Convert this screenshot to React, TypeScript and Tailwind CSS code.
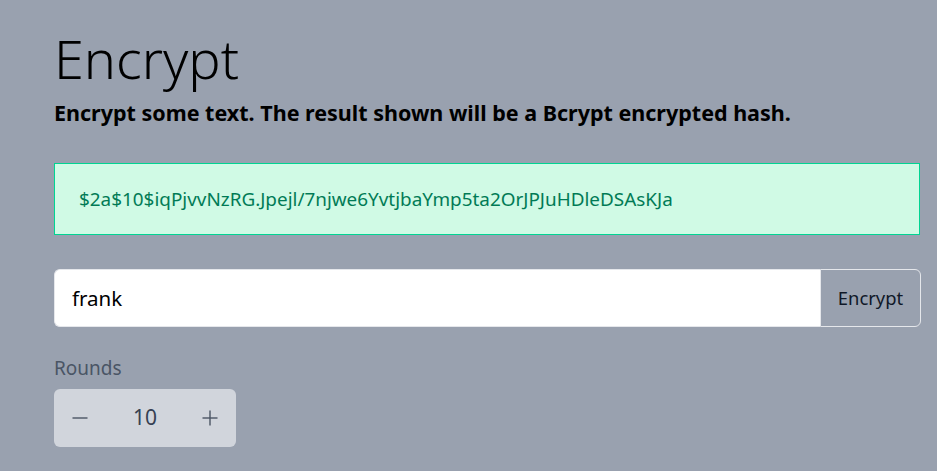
import React, { useState } from "react";

export default function App() {
  const [rounds, setRounds] = useState(10);
  const [text, setText] = useState("frank");
  return (
    <div
      className="min-h-[471px] w-full bg-gray-400 pl-[54px] pr-4 pt-[24px]"
      style={{ fontFamily: '"Noto Sans", "Open Sans", sans-serif' }}
    >
      <h1 className="text-[54px] font-light leading-[68px] text-black">Encrypt</h1>
      <p className="mt-[7px] text-[21.5px] font-bold leading-[28px] text-black">
        Encrypt some text. The result shown will be a Bcrypt encrypted hash.
      </p>
      <div className="mt-[36px] flex h-[72px] w-[866px] items-center border border-emerald-400 bg-emerald-100 px-6 text-[18.9px] text-emerald-700">
        $2a$10$iqPjvvNzRG.Jpejl/7njwe6YvtjbaYmp5ta2OrJPJuHDleDSAsKJa
      </div>
      <div className="mt-[34px] flex h-[58px] w-[867px]">
        <input
          value={text}
          onChange={(e) => setText(e.target.value)}
          className="h-full flex-1 rounded-l-md border border-r-0 border-gray-200 bg-white px-[17px] text-[20.5px] text-black outline-none"
        />
        <button className="h-full w-[101px] rounded-r-md border border-gray-200 bg-gray-400 text-[18.4px] text-gray-900">
          Encrypt
        </button>
      </div>
      <div className="mt-[29px] text-[19px] leading-[24px] text-gray-600">Rounds</div>
      <div className="mt-[9px] flex h-[58px] w-[182px] items-center justify-between rounded-md bg-gray-300 pl-[18px] pr-[18px] text-gray-700">
        <button onClick={() => setRounds((r) => r - 1)} className="flex h-4 w-4 items-center justify-center">
          <svg width="16" height="16" viewBox="0 0 16 16">
            <line x1="0.5" y1="8" x2="15.5" y2="8" stroke="#4b5563" strokeWidth="1.4" />
          </svg>
        </button>
        <span className="text-[21px] text-gray-700">{rounds}</span>
        <button onClick={() => setRounds((r) => r + 1)} className="flex h-4 w-4 items-center justify-center">
          <svg width="16" height="16" viewBox="0 0 16 16">
            <line x1="0.5" y1="8" x2="15.5" y2="8" stroke="#4b5563" strokeWidth="1.4" />
            <line x1="8" y1="0.5" x2="8" y2="15.5" stroke="#4b5563" strokeWidth="1.4" />
          </svg>
        </button>
      </div>
    </div>
  );
}
